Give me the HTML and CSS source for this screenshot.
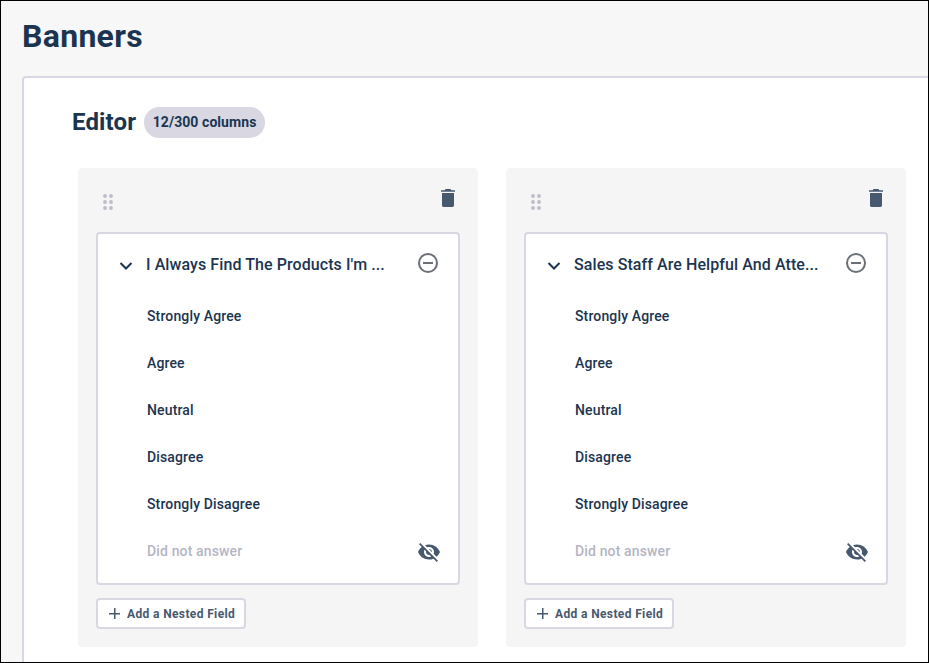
FILE: index.html
```html
<!DOCTYPE html>
<html lang="en">
<head>
<meta charset="utf-8">
<title>Banners</title>
<link rel="stylesheet" href="styles.css">
</head>
<body>
<div class="app">
  <h1 class="page-title">Banners</h1>
  <section class="panel">
    <header class="editor-head">
      <h2 class="editor-title">Editor</h2>
      <span class="badge">12/300 columns</span>
    </header>
    <div class="columns">
      <article class="column">
        <div class="column-top">
          <svg class="grip" width="10" height="16" viewBox="0 0 10 16"><g fill="#bdbcc8"><circle cx="2" cy="2" r="1.9"/><circle cx="8" cy="2" r="1.9"/><circle cx="2" cy="8" r="1.9"/><circle cx="8" cy="8" r="1.9"/><circle cx="2" cy="14" r="1.9"/><circle cx="8" cy="14" r="1.9"/></g></svg>
          <svg class="trash" width="14" height="18" viewBox="0 0 14 18"><path fill="#47596f" d="M4.5 0h5l.8 1.2H14v1.600H0V1.200h3.700zM1 4h12v12.200c0 1-.8 1.800-1.800 1.800H2.800c-1 0-1.800-.8-1.800-1.800z"/></svg>
        </div>
        <div class="field">
          <div class="field-head">
            <svg class="chevron" width="14" height="8" viewBox="0 0 14 8"><path fill="none" stroke="#1b3550" stroke-width="2" d="M1.500 1 7 6.500 12.500 1"/></svg>
            <span class="field-name">I Always Find The Products I'm ...</span>
            <svg class="minus" width="20" height="20" viewBox="0 0 20 20"><circle cx="10" cy="10" r="9" fill="none" stroke="#6b6f76" stroke-width="2"/><path stroke="#6b6f76" stroke-width="2" d="M5 10h10"/></svg>
          </div>
          <ul class="options">
            <li class="option">Strongly Agree</li>
            <li class="option">Agree</li>
            <li class="option">Neutral</li>
            <li class="option">Disagree</li>
            <li class="option">Strongly Disagree</li>
            <li class="option muted">Did not answer
              <svg class="eye" width="24" height="24" viewBox="0 0 24 24"><path fill="#47596f" d="M12 7c2.760 0 5 2.240 5 5 0 .65-.13 1.260-.36 1.830l2.920 2.920c1.510-1.260 2.700-2.890 3.430-4.750-1.730-4.390-6-7.500-11-7.500-1.400 0-2.740.25-3.980.7l2.160 2.160C10.740 7.130 11.350 7 12 7zM2 4.270l2.280 2.280.46.46C3.080 8.300 1.780 10.020 1 12c1.730 4.390 6 7.500 11 7.500 1.550 0 3.030-.3 4.380-.84l.42.42L19.730 22 21 20.730 3.270 3 2 4.270zM7.530 9.800l1.550 1.550c-.05.21-.08.43-.08.65 0 1.660 1.340 3 3 3 .22 0 .44-.03.65-.08l1.550 1.550c-.67.33-1.410.53-2.200.53-2.760 0-5-2.240-5-5 0-.79.2-1.530.53-2.200zm4.310-.78l3.150 3.150.02-.16c0-1.660-1.340-3-3-3l-.17.01z"/></svg>
            </li>
          </ul>
        </div>
        <button class="add-btn" type="button"><span class="plus"></span>Add a Nested Field</button>
      </article>
      <article class="column">
        <div class="column-top">
          <svg class="grip" width="10" height="16" viewBox="0 0 10 16"><g fill="#bdbcc8"><circle cx="2" cy="2" r="1.9"/><circle cx="8" cy="2" r="1.9"/><circle cx="2" cy="8" r="1.9"/><circle cx="8" cy="8" r="1.9"/><circle cx="2" cy="14" r="1.9"/><circle cx="8" cy="14" r="1.9"/></g></svg>
          <svg class="trash" width="14" height="18" viewBox="0 0 14 18"><path fill="#47596f" d="M4.5 0h5l.8 1.2H14v1.600H0V1.200h3.700zM1 4h12v12.200c0 1-.8 1.800-1.800 1.800H2.800c-1 0-1.800-.8-1.800-1.800z"/></svg>
        </div>
        <div class="field">
          <div class="field-head">
            <svg class="chevron" width="14" height="8" viewBox="0 0 14 8"><path fill="none" stroke="#1b3550" stroke-width="2" d="M1.500 1 7 6.500 12.500 1"/></svg>
            <span class="field-name">Sales Staff Are Helpful And Atte...</span>
            <svg class="minus" width="20" height="20" viewBox="0 0 20 20"><circle cx="10" cy="10" r="9" fill="none" stroke="#6b6f76" stroke-width="2"/><path stroke="#6b6f76" stroke-width="2" d="M5 10h10"/></svg>
          </div>
          <ul class="options">
            <li class="option">Strongly Agree</li>
            <li class="option">Agree</li>
            <li class="option">Neutral</li>
            <li class="option">Disagree</li>
            <li class="option">Strongly Disagree</li>
            <li class="option muted">Did not answer
              <svg class="eye" width="24" height="24" viewBox="0 0 24 24"><path fill="#47596f" d="M12 7c2.760 0 5 2.240 5 5 0 .65-.13 1.260-.36 1.830l2.920 2.920c1.510-1.260 2.700-2.890 3.430-4.750-1.730-4.390-6-7.500-11-7.500-1.400 0-2.740.25-3.980.7l2.160 2.160C10.740 7.130 11.350 7 12 7zM2 4.270l2.280 2.280.46.46C3.080 8.300 1.780 10.020 1 12c1.730 4.390 6 7.500 11 7.500 1.550 0 3.030-.3 4.380-.84l.42.42L19.730 22 21 20.730 3.270 3 2 4.270zM7.530 9.800l1.550 1.550c-.05.21-.08.43-.08.65 0 1.660 1.340 3 3 3 .22 0 .44-.03.65-.08l1.550 1.550c-.67.33-1.410.53-2.200.53-2.760 0-5-2.240-5-5 0-.79.2-1.530.53-2.200zm4.310-.78l3.150 3.150.02-.16c0-1.660-1.340-3-3-3l-.17.01z"/></svg>
            </li>
          </ul>
        </div>
        <button class="add-btn" type="button"><span class="plus"></span>Add a Nested Field</button>
      </article>
    </div>
  </section>
</div>
</body>
</html>
```
FILE: styles.css
```css
* { box-sizing: border-box; }
html, body { margin: 0; padding: 0; }
body { font-family: Roboto, "Liberation Sans", sans-serif; background: #f7f7f7; }
.app {
  width: 929px;
  height: 663px;
  border: 1px solid #000;
  background: #f7f7f7;
  overflow: hidden;
  padding: 0 0 0 21px;
}
.page-title {
  margin: 0;
  height: 75px;
  padding-top: 15px;
  font-size: 32px;
  line-height: 40px;
  font-weight: 700;
  letter-spacing: .3px;
  color: #1b3550;
}
.panel {
  width: 960px;
  height: 640px;
  background: #fff;
  border: 2px solid #d8d7e2;
  border-radius: 4px;
  padding: 0 0 0 48px;
}
.editor-head {
  display: flex;
  align-items: center;
  gap: 8px;
  height: 88px;
  margin-bottom: 2px;
}
.editor-title {
  margin: 0;
  font-size: 24px;
  line-height: 30px;
  font-weight: 700;
  letter-spacing: .15px;
  color: #1b3550;
}
.badge {
  display: inline-flex;
  align-items: center;
  height: 31px;
  padding: 0 8.5px;
  border-radius: 16px;
  background: #d8d7e2;
  color: #1b3550;
  font-size: 14px;
  font-weight: 700;
  letter-spacing: .07px;
}
.columns {
  display: flex;
  gap: 28px;
  padding-left: 6px;
}
.column {
  width: 400px;
  height: 479px;
  flex: none;
  background: #f5f5f6;
  border-radius: 4px;
  padding: 18px;
}
.column-top {
  display: flex;
  justify-content: space-between;
  align-items: flex-start;
  height: 46px;
}
.grip { margin: 8px 0 0 7px; }
.trash { margin: 3px 5px 0 0; }
.field {
  width: 364px;
  height: 353px;
  background: #fff;
  border: 2px solid #d8d7e2;
  border-radius: 4px;
}
.field-head {
  display: flex;
  align-items: center;
  height: 58px;
  padding: 0 20px 0 21px;
}
.chevron { flex: none; margin-top: 5px; }
.field-name {
  flex: 1;
  margin-left: 13px;
  padding-top: 2px;
  font-size: 16px;
  font-weight: 500;
  letter-spacing: .08px;
  color: #1b3550;
  white-space: nowrap;
}
.minus { flex: none; margin-top: 0; }
.options { list-style: none; margin: 0; padding: 0 0 0 49px; }
.option {
  position: relative;
  display: flex;
  align-items: center;
  height: 47px;
  font-size: 14px;
  font-weight: 500;
  letter-spacing: .14px;
  color: #1b3550;
}
.muted { color: #b5b5c3; }
.eye { position: absolute; right: 17px; top: 13px; }
.add-btn {
  display: flex;
  align-items: center;
  width: 150px;
  height: 31px;
  margin-top: 13px;
  padding: 0 0 0 11px;
  background: #fff;
  border: 2px solid #d8d7e2;
  border-radius: 4px;
  font-family: inherit;
  font-size: 12px;
  font-weight: 700;
  letter-spacing: .37px;
  color: #47596f;
}
.plus {
  position: relative;
  width: 11px;
  height: 11px;
  margin-right: 7px;
  flex: none;
  background:
    linear-gradient(#47596f, #47596f) center / 100% 1.5px no-repeat,
    linear-gradient(#47596f, #47596f) center / 1.5px 100% no-repeat;
}
```
